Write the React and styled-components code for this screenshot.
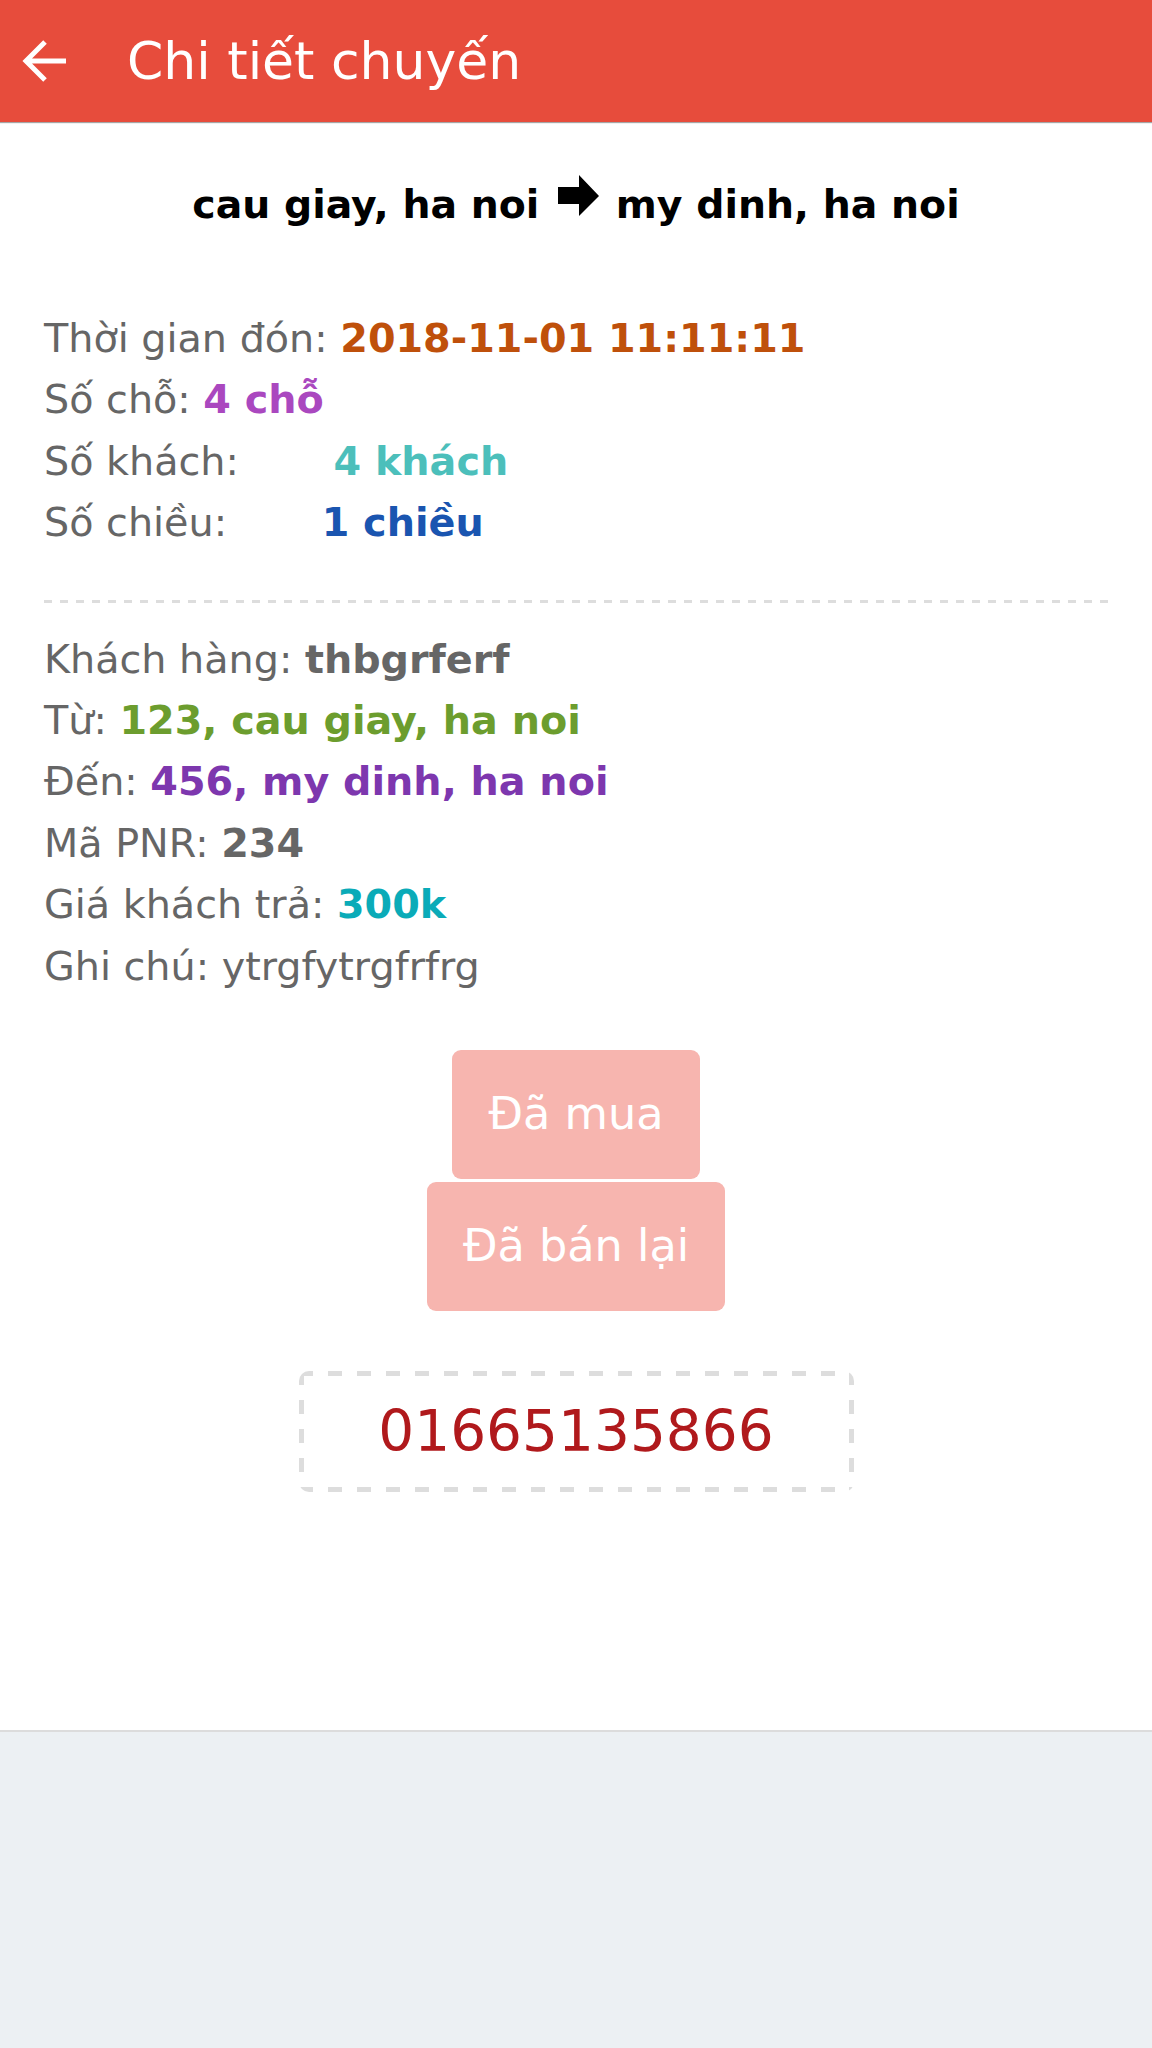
import React from 'react';
import styled, { createGlobalStyle } from 'styled-components';

const GlobalStyle = createGlobalStyle`
  html, body {
    margin: 0;
    padding: 0;
    background: #ecf0f3;
  }

  body {
    font-family: "DejaVu Sans", "Noto Sans", sans-serif;
  }
`;

const Page = styled.div`
  width: 1152px;
`;

const Header = styled.header`
  height: 122px;
  background: #e74c3c;
  display: flex;
  align-items: center;
  padding-left: 22px;
  box-shadow: 0 1px 1px rgba(0, 0, 0, 0.35);
  position: relative;
  z-index: 1;
`;

const BackButton = styled.button`
  width: 46px;
  height: 46px;
  padding: 0;
  border: none;
  background: transparent;
  display: flex;
  align-items: center;
  justify-content: center;
  cursor: pointer;
`;

const HeaderTitle = styled.h1`
  margin: 0 0 0 59px;
  font-size: 52px;
  font-weight: 400;
  color: #ffffff;
  line-height: 1;
`;

const Content = styled.main`
  background: #ffffff;
  padding: 52px 44px 238px;
  border-bottom: 2px solid #dcdcdc;
`;

const RouteTitle = styled.div`
  text-align: center;
  font-size: 39.4px;
  font-weight: 700;
  line-height: 61px;
  color: #000000;
`;

const RouteArrow = styled.svg`
  width: 41px;
  height: 41px;
  margin: 0 3px 0 5px;
  vertical-align: 2px;
`;

const InfoGroup = styled.div`
  margin-top: ${props => props.$top}px;
`;

const Line = styled.div`
  font-size: 39.7px;
  line-height: 61.4px;
  color: #666666;
  white-space: nowrap;
`;

const Value = styled.span`
  font-weight: ${props => (props.$plain ? 400 : 700)};
  color: ${props => props.$color || '#666666'};
  margin-left: ${props => props.$gap || 0}px;
`;

const Separator = styled.div`
  height: 3px;
  margin: 46px 0 26px;
  background: repeating-linear-gradient(
    to right,
    #dddddd 0,
    #dddddd 8px,
    transparent 8px,
    transparent 16px
  );
`;

const Actions = styled.div`
  margin-top: 53px;
  display: flex;
  flex-direction: column;
  align-items: center;
  gap: 3px;
`;

const ActionButton = styled.button`
  font-family: "DejaVu Sans", sans-serif;
  font-size: 44.6px;
  line-height: 51px;
  padding: 39px 36px;
  border: none;
  border-radius: 9px;
  background: #f7b5af;
  color: #ffffff;
  cursor: default;
`;

const PhoneRow = styled.div`
  margin-top: 60px;
  display: flex;
  justify-content: center;
`;

const dashH = 'repeating-linear-gradient(90deg, #dddddd 0 14px, transparent 14px 29px)';
const dashV = 'repeating-linear-gradient(180deg, #dddddd 0 14px, transparent 14px 29px)';

const PhoneBox = styled.div`
  width: 555px;
  box-sizing: border-box;
  border-radius: 10px;
  padding: 27px 0;
  text-align: center;
  font-size: 56.5px;
  line-height: 67px;
  color: #b0191c;
  background:
    ${dashH} left top / 100% 5px no-repeat,
    ${dashH} left bottom / 100% 5px no-repeat,
    ${dashV} left top / 5px 100% no-repeat,
    ${dashV} right top / 5px 100% no-repeat;
`;

const BackIcon = () => (
  <svg width="46" height="46" viewBox="0 0 46 46" fill="none">
    <path
      d="M44 23H5M23 4L4 23L23 42"
      stroke="#ffffff"
      strokeWidth="5"
      strokeLinejoin="miter"
    />
  </svg>
);

const tripInfo = [
  { label: 'Thời gian đón:', value: '2018-11-01 11:11:11', color: '#bf500b' },
  { label: 'Số chỗ:', value: '4 chỗ', color: '#aa48bf' },
  { label: 'Số khách:', value: '4 khách', color: '#4cbfbb', gap: 82 },
  { label: 'Số chiều:', value: '1 chiều', color: '#1a55b0', gap: 82 }
];

const customerInfo = [
  { label: 'Khách hàng:', value: 'thbgrferf' },
  { label: 'Từ:', value: '123, cau giay, ha noi', color: '#6c9d2e' },
  { label: 'Đến:', value: '456, my dinh, ha noi', color: '#7d37ae' },
  { label: 'Mã PNR:', value: '234' },
  { label: 'Giá khách trả:', value: '300k', color: '#0aabb8' },
  { label: 'Ghi chú:', value: 'ytrgfytrgfrfrg', plain: true }
];

const App = () => {
  return (
    <Page>
      <GlobalStyle />
      <Header>
        <BackButton aria-label="Quay lại">
          <BackIcon />
        </BackButton>
        <HeaderTitle>Chi tiết chuyến</HeaderTitle>
      </Header>

      <Content>
        <RouteTitle>
          cau giay, ha noi{' '}
          <RouteArrow viewBox="0 0 41 41">
            <path d="M0 12H21V0L41 21L21 41V29H0Z" fill="#000000" />
          </RouteArrow>{' '}
          my dinh, ha noi
        </RouteTitle>

        <InfoGroup $top={73}>
          {tripInfo.map(item => (
            <Line key={item.label}>
              {item.label}{' '}
              <Value $color={item.color} $gap={item.gap}>{item.value}</Value>
            </Line>
          ))}
        </InfoGroup>

        <Separator />

        <InfoGroup $top={0}>
          {customerInfo.map(item => (
            <Line key={item.label}>
              {item.label}{' '}
              <Value $color={item.color} $plain={item.plain}>{item.value}</Value>
            </Line>
          ))}
        </InfoGroup>

        <Actions>
          <ActionButton>Đã mua</ActionButton>
          <ActionButton>Đã bán lại</ActionButton>
        </Actions>

        <PhoneRow>
          <PhoneBox>01665135866</PhoneBox>
        </PhoneRow>
      </Content>
    </Page>
  );
};

export default App;
